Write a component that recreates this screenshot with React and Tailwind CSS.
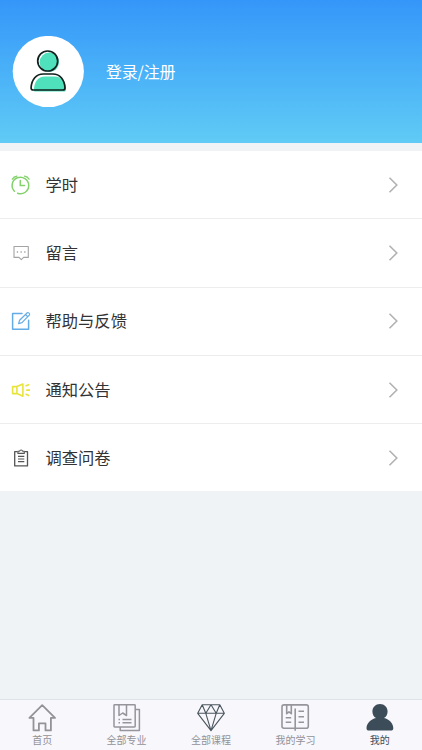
import React from "react";

function Avatar() {
  return (
    <svg className="h-[72px] w-[72px] shrink-0" viewBox="0 0 72 72" fill="none">
      <circle cx="36.300" cy="35.500" r="35.600" fill="#fff" />
      <circle cx="37.300" cy="26.300" r="9.700" fill="#4fe0bc" />
      <path d="M22 55.300c-.5-9 4-14.800 11-14.800h9.500c7 0 11.500 5.500 11.500 13 0 1.500-.7 2.100-2 2.100H23z" fill="#4fe0bc" />
      <circle cx="35.700" cy="25" r="10" stroke="#10201d" strokeWidth="1.700" />
      <path d="M21.200 54c-1.500 0-2.200-.8-2.100-2.200C19.500 43.300 24.300 38 31.300 38h9.500c7 0 11.700 5.300 12.200 13.800.1 1.400-.7 2.200-2 2.200z" stroke="#10201d" strokeWidth="1.700" />
    </svg>
  );
}

const rowSvg = { className: "h-[22px] w-[22px] shrink-0", viewBox: "0 0 22 22", fill: "none" };

function ClockIcon() {
  return (
    <svg {...rowSvg} stroke="#83d26c" strokeWidth="1.500" strokeLinecap="round">
      <path d="M4.400 17.200A8.300 8.300 0 1 1 7.600 19.300M10.300 6.500v5h4.200" />
      <path d="M2.300 5.200C3.200 3.500 4.800 2.400 6.900 2.100M14.500 2.100c2.100.3 3.700 1.400 4.600 3.100" strokeWidth="1.300" />
    </svg>
  );
}

function MessageIcon() {
  return (
    <svg {...rowSvg} stroke="#a4a4a4" strokeWidth="1.100" strokeLinejoin="round">
      <path d="M4 4.500h14.300v10.900h-4.700l-2.300 2.200L9 15.400H4z" />
      <path d="M6.800 10h1.300M10.500 10h1.300M14.200 10h1.300" strokeWidth="1.300" />
    </svg>
  );
}

function EditIcon() {
  return (
    <svg {...rowSvg} stroke="#63ace6" strokeWidth="1.500" strokeLinejoin="round" strokeLinecap="round">
      <path d="M12 3.500H2.600v15.700h16v-9" />
      <path d="M8.600 13.700l1-3.500 7.700-7.500c.8-.7 2.900 1.200 2.200 2.100l-7.500 7.900zM15.500 4.500l2.200 2.200" strokeWidth="1.200" />
    </svg>
  );
}

function HornIcon() {
  return (
    <svg {...rowSvg} stroke="#e8e43c" strokeWidth="1.600" strokeLinejoin="round">
      <path d="M2.600 7.600h4.300v7H2.600zM6.900 7.600l6-2.600v12.200l-6-2.600" />
      <path d="M15.500 7.100l3.800-1.700M16.200 11.100h3.800M15.500 15.100l3.800 1.700" />
    </svg>
  );
}

function ClipboardIcon() {
  return (
    <svg {...rowSvg} stroke="#555" strokeWidth="1.300" strokeLinejoin="round">
      <path d="M7.500 4.700H4.700v14.200h12.800V4.700h-2.800" />
      <path d="M7.900 6.400V4.300h1.700c.2-1.800 2.800-1.800 3 0h1.700v2.100zM8 9.400h6.300M8 12h6.300M8 14.600h6.300" strokeWidth="1.100" />
    </svg>
  );
}

const tabSvg = { className: "block h-[30px] w-[30px]", viewBox: "0 0 30 30", fill: "none" };

function HomeIcon() {
  return (
    <svg {...tabSvg} stroke="#929297" strokeWidth="1.800" strokeLinejoin="round">
      <path d="M15.200 2.200L2.400 14.900h4.100v12.500h5.400v-7h6.600v7h5.400V14.900H28z" />
    </svg>
  );
}

function MajorIcon() {
  return (
    <svg {...tabSvg} stroke="#95959b" strokeWidth="1.500" strokeLinejoin="round">
      <path d="M2.700 1.700h19.800q.7 0 .7.700v20.800q0 .7-.7.700H2.700q-.7 0-.7-.7V2.400q0-.7.700-.7z" />
      <path d="M7 1.700v10.800l3.700-2.500 3.800 2.500V1.700M23.200 6.500h4.200v21H8.200V24M6.500 16.500H8M10.500 16.500h9M6.500 19.800H8M10.500 19.800h9" />
    </svg>
  );
}

function DiamondIcon() {
  return (
    <svg {...tabSvg} stroke="#4b565e" strokeWidth="1.100" strokeLinejoin="round">
      <path d="M6.200 1.800h17.600l4.500 8.500L15 27.700 1.700 10.300zM1.700 10.300h26.600M6.200 1.800l3.600 8.500L15 1.800l5.200 8.500 3.600-8.500M9.800 10.300L15 27.700l5.200-17.400" />
    </svg>
  );
}

function StudyIcon() {
  return (
    <svg {...tabSvg} stroke="#95959b" strokeWidth="1.600" strokeLinejoin="round">
      <path d="M4 1.900h22.300c1.300 0 2 .7 2 2v19.300c0 1.300-.7 2-2 2H4c-1.300 0-2-.7-2-2V3.900c0-1.300.7-2 2-2zM15.200 5.500v22.200M6.700 2v8.700L9 8.800l2.300 1.900V2" />
      <path d="M5.700 14.700h5.500M5.700 19.300h5.500M18.500 8.300H24M18.500 13.700H24M18.500 19.300H24" />
    </svg>
  );
}

function MineIcon() {
  return (
    <svg {...tabSvg} fill="#3d4c59">
      <path d="M15 1c4.400 0 7.600 3.300 7.600 7.500 0 3-1.400 5.300-3.600 6.500 5.300 1.200 9.300 5.500 9.300 10.200 0 1.500-.9 2.400-2.500 2.400H4c-1.600 0-2.500-.9-2.500-2.400C1.500 20.500 5.700 16.200 11 15c-2.200-1.200-3.600-3.500-3.600-6.500C7.400 4.300 10.600 1 15 1z" />
    </svg>
  );
}

const rows = [
  { label: "学时", Icon: ClockIcon },
  { label: "留言", Icon: MessageIcon },
  { label: "帮助与反馈", Icon: EditIcon },
  { label: "通知公告", Icon: HornIcon },
  { label: "调查问卷", Icon: ClipboardIcon },
];

const tabs = [
  { label: "首页", Icon: HomeIcon },
  { label: "全部专业", Icon: MajorIcon },
  { label: "全部课程", Icon: DiamondIcon },
  { label: "我的学习", Icon: StudyIcon },
  { label: "我的", Icon: MineIcon, active: true },
];

export default function App() {
  return (
    <div className="flex h-[750px] w-[422px] flex-col overflow-hidden bg-[#eff3f6] font-['Noto_Sans_CJK_SC',sans-serif]">
      <header className="flex h-[143px] shrink-0 items-center bg-linear-to-b from-[#3596f9] to-[#60cbf5] pl-3">
        <Avatar />
        <span className="ml-[22px] pb-0.5 text-base leading-6 tracking-[-0.2px] text-white">登录/注册</span>
      </header>
      <main className="mt-2 flex-1">
        {rows.map(({ label, Icon }, i) => (
          <div
            key={label}
            className={`flex items-center bg-white pr-[23px] pl-[10px] ${i < rows.length - 1 ? "h-[68.3px] border-b border-[#ededed]" : "h-[67px]"}`}
          >
            <Icon />
            <span className="ml-[13.5px] flex-1 pb-0.5 text-[16.3px] leading-6 text-[#333]">{label}</span>
            <svg className="h-4 w-[11px]" viewBox="0 0 11 16" fill="none" stroke="#b2b2b2" strokeWidth="1.600">
              <path d="M1.500 .7l7.300 7.300-7.300 7.300" />
            </svg>
          </div>
        ))}
      </main>
      <nav className="grid h-[51px] shrink-0 grid-cols-5 border-t border-[#dde3e7] bg-[#f7f7fc]">
        {tabs.map(({ label, Icon, active }) => (
          <div key={label} className="flex flex-col items-center pt-[3px]">
            <Icon />
            <span className={`-mt-px text-[10px] leading-[15px] ${active ? "text-[#3d4c59]" : "text-[#929297]"}`}>{label}</span>
          </div>
        ))}
      </nav>
    </div>
  );
}
